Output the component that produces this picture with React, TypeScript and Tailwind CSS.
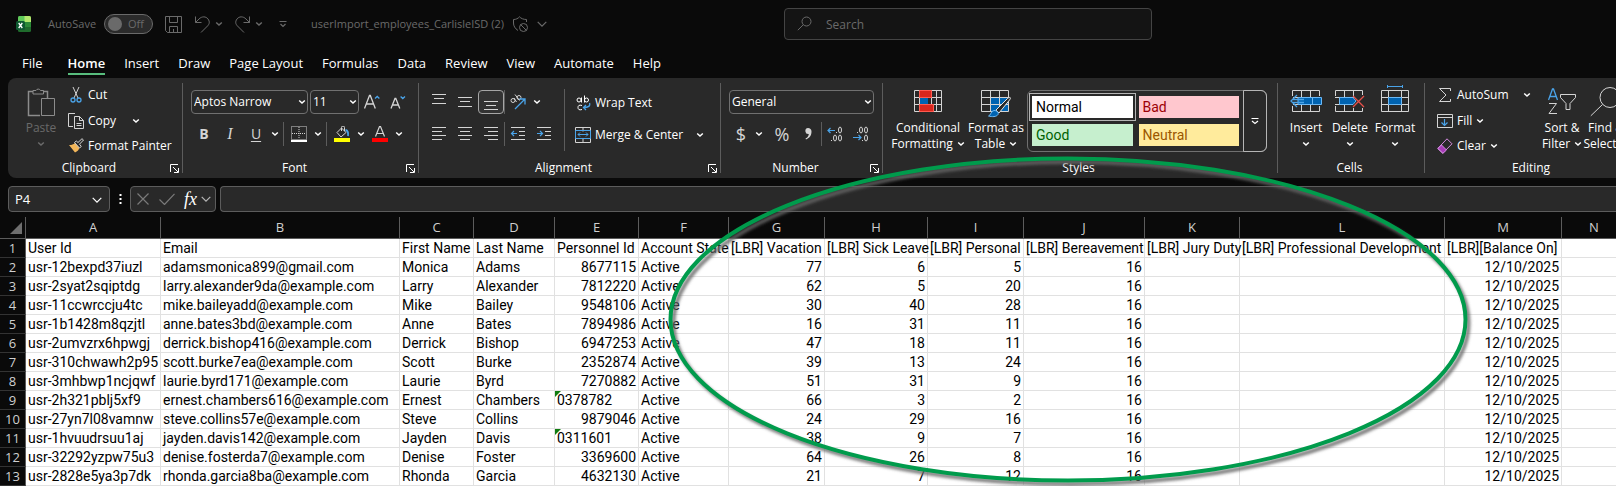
import type { ReactNode } from "react";
import clsx from "clsx";

const TABS = [
  "File",
  "Home",
  "Insert",
  "Draw",
  "Page Layout",
  "Formulas",
  "Data",
  "Review",
  "View",
  "Automate",
  "Help",
];

const COLUMNS = [
  { letter: "A", width: "w-[135px]", title: "User Id" },
  { letter: "B", width: "w-[239px]", title: "Email" },
  { letter: "C", width: "w-[74px]", title: "First Name" },
  { letter: "D", width: "w-[81px]", title: "Last Name" },
  { letter: "E", width: "w-[84px]", title: "Personnel Id" },
  { letter: "F", width: "w-[90px]", title: "Account State" },
  { letter: "G", width: "w-[96px]", title: "[LBR] Vacation" },
  { letter: "H", width: "w-[103px]", title: "[LBR] Sick Leave" },
  { letter: "I", width: "w-[96px]", title: "[LBR] Personal" },
  { letter: "J", width: "w-[121px]", title: "[LBR] Bereavement" },
  { letter: "K", width: "w-[95px]", title: "[LBR] Jury Duty" },
  { letter: "L", width: "w-[205px]", title: "[LBR] Professional Development" },
  { letter: "M", width: "w-[117px]", title: "[LBR][Balance On]" },
  { letter: "N", width: "w-[65px]", title: "" },
];

// id, email, first, last, personnel id, vacation, sick leave, personal
const EMPLOYEES: [string, string, string, string, string, number, number, number][] = [
  ["usr-12bexpd37iuzl", "adamsmonica899@gmail.com", "Monica", "Adams", "8677115", 77, 6, 5],
  ["usr-2syat2sqiptdg", "larry.alexander9da@example.com", "Larry", "Alexander", "7812220", 62, 5, 20],
  ["usr-11ccwrccju4tc", "mike.baileyadd@example.com", "Mike", "Bailey", "9548106", 30, 40, 28],
  ["usr-1b1428m8qzjtl", "anne.bates3bd@example.com", "Anne", "Bates", "7894986", 16, 31, 11],
  ["usr-2umvzrx6hpwgj", "derrick.bishop416@example.com", "Derrick", "Bishop", "6947253", 47, 18, 11],
  ["usr-310chwawh2p95", "scott.burke7ea@example.com", "Scott", "Burke", "2352874", 39, 13, 24],
  ["usr-3mhbwp1ncjqwf", "laurie.byrd171@example.com", "Laurie", "Byrd", "7270882", 51, 31, 9],
  ["usr-2h321pblj5xf9", "ernest.chambers616@example.com", "Ernest", "Chambers", "0378782", 66, 3, 2],
  ["usr-27yn7l08vamnw", "steve.collins57e@example.com", "Steve", "Collins", "9879046", 24, 29, 16],
  ["usr-1hvuudrsuu1aj", "jayden.davis142@example.com", "Jayden", "Davis", "0311601", 38, 9, 7],
  ["usr-32292yzpw75u3", "denise.fosterda7@example.com", "Denise", "Foster", "3369600", 64, 26, 8],
  ["usr-2828e5ya3p7dk", "rhonda.garcia8ba@example.com", "Rhonda", "Garcia", "4632130", 21, 7, 12],
];

function Svg({ w = 16, h = 16, children, className }: { w?: number; h?: number; children: ReactNode; className?: string }) {
  return (
    <svg
      width={w}
      height={h}
      viewBox={`0 0 ${w} ${h}`}
      fill="none"
      stroke="currentColor"
      className={clsx("shrink-0", className)}
      aria-hidden="true"
    >
      {children}
    </svg>
  );
}

function Chevron({ className }: { className?: string }) {
  return (
    <Svg w={8} h={8} className={className}>
      <path d="M1.200 2.500 4 5l2.800-2.500" strokeWidth="1.500" />
    </Svg>
  );
}

function WideChevron({ className }: { className?: string }) {
  return (
    <Svg w={10} h={8} className={className}>
      <path d="M.7 1.800 5 6.200 9.300 1.800" strokeWidth="1.200" />
    </Svg>
  );
}

function MenuArrow({ label }: { label: string }) {
  return (
    <button aria-label={label} className="grid h-6 w-3 shrink-0 place-items-center">
      <Chevron />
    </button>
  );
}

function IconButton({ label, children, active }: { label: string; children: ReactNode; active?: boolean }) {
  return (
    <button
      aria-label={label}
      className={clsx(
        "grid h-6 w-[26px] shrink-0 place-items-center text-[#d4d4d4]",
        active && "rounded border border-[#a6a6a6] bg-[#333]",
      )}
    >
      {children}
    </button>
  );
}

function Rule() {
  return <div className="h-6 w-px shrink-0 bg-[#5c5c5c]" />;
}

function Group({ name, width, launcher, children }: { name: string; width: string; launcher?: boolean; children: ReactNode }) {
  return (
    <section aria-label={name} className={clsx("flex shrink-0 flex-col", width)}>
      <div className="flex h-[81px]">{children}</div>
      <div className="flex h-[18px] items-center pr-[3px]">
        <span className="flex-1 text-center">{name}</span>
        {launcher && (
          <button aria-label={`${name} settings`}>
            <Svg w={9} h={9}>
              <path d="M.5 8V.5H8M3 3l5 5M8.500 4v4.500H4" />
            </Svg>
          </button>
        )}
      </div>
    </section>
  );
}

function Divider() {
  return <div className="my-[5px] w-px shrink-0 bg-[#5c5c5c]" />;
}

function ListButton({ icon, label, children }: { icon: ReactNode; label: string; children?: ReactNode }) {
  return (
    <button className="flex h-[26px] items-center gap-1 whitespace-nowrap">
      {icon}
      <span>{label}</span>
      {children}
    </button>
  );
}

function BigButton({ icon, width, children }: { icon: ReactNode; width: string; children: ReactNode }) {
  return (
    <button className={clsx("flex shrink-0 flex-col items-center whitespace-nowrap pt-2 leading-4", width)}>
      <span className="flex h-[34px] items-start justify-center">{icon}</span>
      {children}
    </button>
  );
}

function PickList({ label, value, width }: { label: string; value: string; width: string }) {
  return (
    <div className={clsx("relative shrink-0", width)}>
      <select
        aria-label={label}
        className="h-6 w-full appearance-none rounded border border-[#707070] bg-[#292929] pl-[2px] leading-[22px] text-white"
      >
        <option>{value}</option>
      </select>
      <Chevron className="pointer-events-none absolute top-2 right-[2px]" />
    </div>
  );
}

function Lines({ rows }: { rows: [number, number, number][] }) {
  return (
    <Svg>
      {rows.map(([x1, x2, y]) => (
        <path key={y} d={`M${x1} ${y}.500H${x2}`} />
      ))}
    </Svg>
  );
}

function TitleBar() {
  return (
    <header className="flex h-12 items-start text-[#6a6a6a]">
      <div className="flex h-12 w-[784px] shrink-0 items-center pl-4 text-[11px]">
        <svg width="16" height="16" viewBox="0 0 16 16" className="shrink-0" aria-label="Excel">
          <rect x="2" width="13" height="16" rx="1.500" fill="#1f6b2c" />
          <path d="M3.500 0H9v6H2V1.500A1.500 1.500 0 0 1 3.500 0z" fill="#5fc95a" />
          <path d="M8.500 0h5A1.500 1.500 0 0 1 15 1.500V6H8.500z" fill="#b4e86e" />
          <path d="M8.500 6H15v5H8.500z" fill="#2b8a38" />
          <rect y="5" width="9" height="9" rx="1.500" fill="#0e5a31" />
          <path d="M2.700 7l3.600 5M6.300 7l-3.600 5" stroke="#fff" strokeWidth="1.300" />
        </svg>
        <label htmlFor="autosave" className="pl-4">AutoSave</label>
        <div className="relative ml-2 h-5 w-[49px] shrink-0">
          <input
            id="autosave"
            type="checkbox"
            role="switch"
            className="block h-5 w-[49px] appearance-none rounded-full border border-[#6a6a6a] bg-[#2b2b2b]"
          />
          <div className="pointer-events-none absolute inset-0 flex items-center gap-[6px] pl-1">
            <span className="size-[14px] rounded-full bg-[#6a6a6a]" />
            <span>Off</span>
          </div>
        </div>
        <button aria-label="Save" className="ml-3">
          <Svg w={17} h={17}>
            <path d="M.5.5h16v16H2.500l-2-2zM4.500.5v6h8v-6M4.500 16.500v-6h8v6M8.500 13v3" />
          </Svg>
        </button>
        <button aria-label="Undo" className="ml-[13px]">
          <Svg w={16} h={17}>
            <path d="M.5.5v6h6M.5 6.500 4 3C7 0 11 .3 13 3s1.500 5-.5 7L6 16.500" />
          </Svg>
        </button>
        <button aria-label="Undo list" className="ml-1"><Chevron /></button>
        <button aria-label="Redo" className="ml-3">
          <Svg w={16} h={17}>
            <path d="M14.500.5v6h-6M14.500 6.500 11 3C8 0 4 .3 2 3s-1.500 5 .5 7L9 16.500" />
          </Svg>
        </button>
        <button aria-label="Redo list" className="ml-1"><Chevron /></button>
        <button aria-label="Customize toolbar" className="ml-4">
          <Svg w={8} h={8}>
            <path d="M.5 1.500h7M1.500 4 4 6.500 6.500 4" strokeWidth="1.200" />
          </Svg>
        </button>
        <span className="ml-6 whitespace-nowrap">userImport_employees_CarlisleISD (2)</span>
        <Svg w={17} h={17} className="ml-2">
          <path d="M6 14.500C3 12.500 1.500 10 1.500 7V3.500C4 3.500 6 2.500 7.500.8 9 2.500 11.500 3.500 14.500 3.500V6" />
          <circle cx="11.500" cy="11.500" r="4" />
          <path d="m8.700 8.700 5.600 5.600" />
        </Svg>
        <button aria-label="File options" className="ml-2"><WideChevron /></button>
      </div>
      <div className="relative mt-2 w-[368px] shrink-0">
        <input
          type="search"
          aria-label="Search"
          placeholder="Search"
          className="block h-8 w-full rounded border border-[#444] bg-[#141414] pl-[41px] placeholder:text-[#6a6a6a]"
        />
        <Svg className="pointer-events-none absolute top-2 left-[13px]">
          <circle cx="9.500" cy="5.500" r="4.500" />
          <path d="M6.300 8.700.8 14.200" />
        </Svg>
      </div>
    </header>
  );
}

function TabBar() {
  return (
    <nav className="flex h-[30px] items-start gap-[19px] pl-[22px] text-[13px] leading-[26px]">
      {TABS.map((tab) => (
        <a
          key={tab}
          href={`#${tab}`}
          className={clsx(
            "whitespace-nowrap pt-[2px]",
            tab === "File" && "pr-[6px]",
            tab === "Home" && "h-[27px] border-b-2 border-[#58bd7d] font-semibold",
          )}
        >
          {tab}
        </a>
      ))}
    </nav>
  );
}

function ClipboardGroup() {
  return (
    <Group name="Clipboard" width="w-[174px]" launcher>
      <button disabled className="flex w-[60px] flex-col items-center pt-2 pl-[6px] leading-4 text-[#6a6a6a]">
        <Svg w={28} h={34} className="text-[#8c8c8c]">
          <path d="M13 29.500H1.500V5.500H6M16 5.500h4.500V12" strokeWidth="1.500" />
          <path d="M6 8V4.500h3a2.500 2.500 0 0 1 4.500 0h3V8z" />
          <path d="M14.500 12.500h13v17h-13z" />
        </Svg>
        Paste
        <Chevron className="mt-1" />
      </button>
      <div className="flex flex-col items-start pt-1">
        <ListButton
          label="Cut"
          icon={
            <Svg>
              <path d="M5 0l5 11M11 0 6 11" stroke="#d4d4d4" />
              <circle cx="5" cy="13" r="2" stroke="#4aa3e8" strokeWidth="1.300" />
              <circle cx="11" cy="13" r="2" stroke="#4aa3e8" strokeWidth="1.300" />
            </Svg>
          }
        />
        <ListButton
          label="Copy"
          icon={
            <Svg>
              <path d="M5 13.500H.5V.5H7M6.500 3.500h5l4 4v8h-9zM11.500 3.500v4h4M8.500 10.500h5M8.500 12.500h5" stroke="#d4d4d4" />
            </Svg>
          }
        >
          <Chevron className="ml-3" />
        </ListButton>
        <ListButton
          label="Format Painter"
          icon={
            <Svg>
              <path d="M1 7l6 7.500c2.500-1 4-3 4.500-5L7 5C5 6.800 3 7.200 1 7z" fill="#f2b65a" stroke="none" />
              <path d="M6.500 4.500 11.500 10l1.800-1.500-1.800-2.300L15.500 2 14 .7 10 4.500 8.300 3z" fill="#292929" stroke="#d4d4d4" />
            </Svg>
          }
        />
      </div>
    </Group>
  );
}

function FontGroup() {
  return (
    <Group name="Font" width="w-[235px]" launcher>
      <div className="flex flex-col gap-2 pt-3 pl-2">
        <div className="flex">
          <PickList label="Font" value="Aptos Narrow" width="w-[117px]" />
          <div className="w-[2px]" />
          <PickList label="Font size" value="11" width="w-[49px]" />
          <IconButton label="Increase font size">
            <Svg>
              <path d="M.5 14.500 5.500 1.500h.8l5 13M2.500 10h7" strokeWidth="1.300" />
              <path d="M11 4.500 13.200 2.500 15.400 4.500" stroke="#4aa3e8" strokeWidth="1.300" />
            </Svg>
          </IconButton>
          <IconButton label="Decrease font size">
            <Svg>
              <path d="M1 14.500 5 4.500h.8l4 10M2.500 11h6" strokeWidth="1.300" />
              <path d="M10.600 2.500 12.800 4.500 15 2.500" stroke="#4aa3e8" strokeWidth="1.300" />
            </Svg>
          </IconButton>
        </div>
        <div className="flex">
          <IconButton label="Bold"><span className="text-sm font-bold">B</span></IconButton>
          <IconButton label="Italic"><span className="font-['Liberation_Serif',serif] text-base italic">I</span></IconButton>
          <IconButton label="Underline"><span className="text-sm leading-4 underline underline-offset-2">U</span></IconButton>
          <MenuArrow label="Underline styles" />
          <div className="px-[2px]"><Rule /></div>
          <IconButton label="Borders">
            <Svg>
              <path d="M.5.5h15v13H.5zM8 1v12M1 7.500h14" strokeDasharray="1 1" />
              <path d="M0 15h16" strokeWidth="2" stroke="#fff" />
            </Svg>
          </IconButton>
          <MenuArrow label="Border styles" />
          <div className="px-[2px]"><Rule /></div>
          <IconButton label="Fill color">
            <Svg>
              <path d="M3 6.500 7.500 2 12 6.500 7 11zM7.500 5V1.500a1.500 1.500 0 0 1 3 0V5" />
              <path d="M11.500 4c2.500.5 3 2.500 2.500 6" stroke="#4aa3e8" strokeWidth="1.800" />
              <path d="M0 14h16" strokeWidth="4" stroke="#ffff00" />
            </Svg>
          </IconButton>
          <MenuArrow label="Fill colors" />
          <IconButton label="Font color">
            <Svg>
              <path d="M3.500 10.500 7.500.5h1l4 10M5 7.500h6" strokeWidth="1.200" />
              <path d="M0 14h16" strokeWidth="4" stroke="#ff0000" />
            </Svg>
          </IconButton>
          <MenuArrow label="Font colors" />
        </div>
      </div>
    </Group>
  );
}

function AlignmentGroup() {
  return (
    <Group name="Alignment" width="w-[301px]" launcher>
      <div className="flex w-[138px] flex-col gap-2 pt-3 pl-[7px]">
        <div className="flex">
          <IconButton label="Top align"><Lines rows={[[1, 15, 0], [3, 13, 4], [1, 15, 9]]} /></IconButton>
          <IconButton label="Middle align"><Lines rows={[[1, 15, 3], [3, 13, 7], [1, 15, 12]]} /></IconButton>
          <IconButton label="Bottom align" active><Lines rows={[[1, 15, 7], [3, 13, 11], [1, 15, 15]]} /></IconButton>
          <Rule />
          <IconButton label="Orientation">
            <Svg>
              <circle cx="3" cy="6.500" r="2" />
              <path d="M4 4 6.500 8M5 .5l4.500 6" />
              <circle cx="9" cy="3.500" r="2" />
              <path d="M5 15 14.500 5.500M9.500 5h5.500v5.500" stroke="#4aa3e8" strokeWidth="1.300" />
            </Svg>
          </IconButton>
          <MenuArrow label="Orientation list" />
        </div>
        <div className="flex">
          <IconButton label="Align left"><Lines rows={[[1, 15, 1], [1, 11, 5], [1, 15, 9], [1, 11, 13]]} /></IconButton>
          <IconButton label="Center"><Lines rows={[[1, 15, 1], [3, 13, 5], [1, 15, 9], [3, 13, 13]]} /></IconButton>
          <IconButton label="Align right"><Lines rows={[[1, 15, 1], [5, 15, 5], [1, 15, 9], [5, 15, 13]]} /></IconButton>
          <Rule />
          <IconButton label="Decrease indent">
            <Svg>
              <path d="M1 1.500h14M9 5.500h6M9 9.500h6M1 13.500h14" />
              <path d="M1.500 7.500H7M4 5 1.500 7.500 4 10" stroke="#4aa3e8" strokeWidth="1.200" />
            </Svg>
          </IconButton>
          <IconButton label="Increase indent">
            <Svg>
              <path d="M1 1.500h14M9 5.500h6M9 9.500h6M1 13.500h14" />
              <path d="M1 7.500h5.500M4 5l2.500 2.500L4 10" stroke="#4aa3e8" strokeWidth="1.200" />
            </Svg>
          </IconButton>
        </div>
      </div>
      <div className="mt-[11px] ml-[7px] h-[62px] w-px bg-[#5c5c5c]" />
      <div className="flex flex-1 flex-col gap-[6px] pt-3 pl-[10px]">
        <ListButton
          label="Wrap Text"
          icon={
            <Svg>
              <circle cx="4" cy="5" r="2" />
              <path d="M6.500 2.500v5M9.500.5v7M7 10.500c-3-1-4 .3-4 2s1 3 4 2" />
              <circle cx="11.500" cy="5" r="2" />
              <path d="M14.500 8c1 3-1 4.500-6 4.500M11 10 8.500 12.500 11 15" stroke="#4aa3e8" strokeWidth="1.300" />
            </Svg>
          }
        />
        <div className="flex items-center justify-between pr-[14px]">
          <ListButton
            label="Merge & Center"
            icon={
              <Svg>
                <path d="M.5.5h15v15H.5zM8 .5v4M8 11.500v4" stroke="#d4d4d4" />
                <path d="M.5 3.500h15v8H.5zM3 7.500h10M5 5.500l-2 2 2 2M11 5.500l2 2-2 2" stroke="#4aa3e8" />
              </Svg>
            }
          />
          <MenuArrow label="Merge options" />
        </div>
      </div>
    </Group>
  );
}

function NumberGroup() {
  return (
    <Group name="Number" width="w-[161px]" launcher>
      <div className="flex flex-1 flex-col gap-2 px-2 pt-3">
        <PickList label="Number format" value="General" width="w-full" />
        <div className="flex">
          <button aria-label="Accounting format" className="h-6 w-6 text-lg leading-6 text-[#d4d4d4]">$</button>
          <MenuArrow label="Accounting formats" />
          <div className="w-1" />
          <IconButton label="Percent style"><span className="text-lg leading-6">%</span></IconButton>
          <IconButton label="Comma style">
            <Svg w={8} h={14}>
              <path d="M4 1a3 3 0 1 0 .8 6C4.500 9 3.500 10.500 1.500 11.500l.5 1C6 11 7.500 8 7.500 4.500 7.500 2.300 6 1 4 1z" fill="currentColor" stroke="none" />
            </Svg>
          </IconButton>
          <Rule />
          <IconButton label="Increase decimal">
            <Svg>
              <path d="M.8 4.500H8M3.500 2 1 4.500 3.500 7" stroke="#4aa3e8" strokeWidth="1.200" />
              <ellipse cx="13" cy="4" rx="1.500" ry="3" />
              <ellipse cx="8" cy="12" rx="1.500" ry="3" />
              <ellipse cx="13" cy="12" rx="1.500" ry="3" />
              <path d="M9 6.500h1M4 14.500h1" />
            </Svg>
          </IconButton>
          <IconButton label="Decrease decimal">
            <Svg>
              <path d="M0 11.500h8M5.500 9 8 11.500 5.500 14" stroke="#4aa3e8" strokeWidth="1.200" />
              <ellipse cx="13" cy="4" rx="1.500" ry="3" />
              <ellipse cx="8" cy="4" rx="1.500" ry="3" />
              <ellipse cx="13" cy="12" rx="1.500" ry="3" />
              <path d="M4 6.500h1M9 14.500h1" />
            </Svg>
          </IconButton>
        </div>
      </div>
    </Group>
  );
}

function StylesGroup() {
  return (
    <Group name="Styles" width="w-[394px]">
      <BigButton
        width="w-[82px] pl-2"
        icon={
          <Svg w={28} h={28} className="text-[#d4d4d4]">
            <path d="M.5 4.500h27v21H.5zM5.500 4.500v21M17.500 4.500v21M22.500 4.500v21M.5 11.500h27M.5 18.500h27" />
            <path d="M5.500 4.500h12v7h-12zM5.500 18.500h14v7h-14z" fill="#d9261c" stroke="#ff5a4f" />
            <path d="M6 12h8v6H6z" fill="#0063b1" stroke="none" />
            <path d="M14 12h3v6h-3z" fill="#292929" stroke="none" />
          </Svg>
        }
      >
        <span>Conditional</span>
        <span className="flex items-center gap-1">Formatting <Chevron /></span>
      </BigButton>
      <BigButton
        width="w-[62px]"
        icon={
          <Svg w={30} h={32} className="text-[#d4d4d4]">
            <path d="M9.500 11.500h18v14h-18z" fill="#0063b1" stroke="none" />
            <path d="M.5 4.500h27v21H.5zM9.500 4.500v21M18.500 4.500v21M.5 11.500h27M.5 18.500h27" />
            <path d="M15 24 26.500 12.500c2.500-2 4-1 2 1.500L18 27z" fill="#292929" stroke="#e6e6e6" />
            <path d="M7.500 30c2.500-.5 2-5 5.500-5.500 3 0 5 2 4 4-1.500 2.500-6 2.500-9.500 1.500z" fill="#0063b1" stroke="#6bb8f5" />
          </Svg>
        }
      >
        <span>Format as</span>
        <span className="flex items-center gap-1">Table <Chevron /></span>
      </BigButton>
      <div className="mt-3 flex h-[62px] w-[240px] rounded-md border border-[#707070] text-sm">
        <div className="grid flex-1 grid-cols-2 gap-[6px] px-1 py-[5px] font-[Roboto,sans-serif] *:pl-1 *:text-left">
          <button className="bg-white text-black outline-1 outline-offset-2 outline-[#b5b5b5]">Normal</button>
          <button className="bg-[#ffc7ce] text-[#9c0006]">Bad</button>
          <button className="bg-[#c6efce] text-[#006100]">Good</button>
          <button className="bg-[#ffeb9c] text-[#9c5700]">Neutral</button>
        </div>
        <button aria-label="More styles" className="-my-px -mr-px grid w-6 place-items-center rounded-r-md border border-[#b5b5b5]">
          <Svg w={8} h={8}>
            <path d="M.5 1.500h7M1 4l3 2.500L7 4" strokeWidth="1.200" />
          </Svg>
        </button>
      </div>
    </Group>
  );
}

function CellsGroup() {
  return (
    <Group name="Cells" width="w-[146px]">
      <div className="flex pl-[6px]">
        <BigButton
          width="w-11"
          icon={
            <Svg w={32} h={28} className="text-[#d4d4d4]">
              <path d="M2.500 10V4.500h27V10M2.500 20v5.500h27V20M11.500 4.500v7M20.500 4.500v7M11.500 18.500v7M20.500 18.500v7M3 11.500h26M3 18.500h26" />
              <path d="M8 11.500h23.500v7H8z" fill="#0063b1" stroke="#6bb8f5" />
              <path d="M22.500 12v6" stroke="#6bb8f5" />
              <path d="M14 13.500H3M14 16.500H3M7 9 1 15l6 6" stroke="#4aa3e8" strokeWidth="1.300" />
            </Svg>
          }
        >
          Insert
          <Chevron className="mt-1" />
        </BigButton>
        <BigButton
          width="w-11"
          icon={
            <Svg w={30} h={28} className="text-[#d4d4d4]">
              <path d="M.5 10V4.500h27V9M.5 20v5.500h27V22M9.500 4.500v7M18.500 4.500v7M9.500 18.500v7M18.500 22v3M0 11.500h19M0 18.500h17" />
              <path d="M4.500 11.500H18l3 3.500-3 3.500H4.500z" fill="#0063b1" stroke="#6bb8f5" />
              <path d="m18 10 11 11M29 10 18 21" stroke="#e8504a" strokeWidth="1.300" />
            </Svg>
          }
        >
          Delete
          <Chevron className="mt-1" />
        </BigButton>
        <BigButton
          width="w-[46px]"
          icon={
            <Svg w={28} h={28} className="overflow-visible text-[#d4d4d4]">
              <path d="M.5 4.500h27v21H.5zM7.500 4.500v21M20.500 4.500v21M.5 11.500h27M.5 18.500h27" />
              <path d="M7.500 11.500h13v7h-13z" fill="#0063b1" stroke="#6bb8f5" />
              <path d="M6.500.5h15M6.500-1v3M21.500-1v3" stroke="#4aa3e8" />
            </Svg>
          }
        >
          Format
          <Chevron className="mt-1" />
        </BigButton>
      </div>
    </Group>
  );
}

function EditingGroup() {
  return (
    <Group name="Editing" width="w-[215px]">
      <div className="flex w-[115px] shrink-0 flex-col pt-1 pl-3">
        <div className="flex items-center justify-between pr-[7px]">
          <ListButton
            label="AutoSum"
            icon={
              <Svg className="text-[#d4d4d4]">
                <path d="M13.500 4V1.500H2.500L9 8l-6.500 6.500h11V12" />
              </Svg>
            }
          />
          <MenuArrow label="Sum functions" />
        </div>
        <ListButton
          label="Fill"
          icon={
            <Svg>
              <path d="M.5 1.500h15v13H.5zM.5 4.500h15" stroke="#d4d4d4" />
              <path d="M7.500 6v6.500M4.500 9.500l3 3 3-3" stroke="#4aa3e8" strokeWidth="1.200" />
            </Svg>
          }
        >
          <Chevron />
        </ListButton>
        <ListButton
          label="Clear"
          icon={
            <Svg>
              <path d="M.7 10.500 10 .8l5 5-9.300 9.500z" stroke="#d48be0" />
              <path d="M1 10.500 4.500 7l5 5L6 15.300z" fill="#a83bb8" stroke="#d48be0" />
            </Svg>
          }
        >
          <Chevron />
        </ListButton>
      </div>
      <BigButton
        width="w-11"
        icon={
          <Svg w={28} h={32} className="text-[#d4d4d4]">
            <path d="M.5 14 4.500 3h1l4 11M2 10.500h6" stroke="#4aa3e8" strokeWidth="1.300" />
            <path d="M1 17.500h7.500L1 27.500h8M12.500 8.500h15v3L22 17.500v6h-4v-6l-5.500-6z" />
          </Svg>
        }
      >
        <span>Sort &amp;</span>
        <span className="flex items-center gap-1">Filter <Chevron /></span>
      </BigButton>
      <BigButton
        width="w-11"
        icon={
          <Svg w={32} h={32} className="text-[#d4d4d4]">
            <circle cx="20" cy="11.500" r="10" />
            <path d="M12.500 18.500.8 29.800" />
          </Svg>
        }
      >
        <span>Find &amp;</span>
        <span className="flex items-center gap-1">Select <Chevron /></span>
      </BigButton>
    </Group>
  );
}

function FormulaBar() {
  return (
    <div className="mt-2 mb-[5px] flex h-[26px] pl-2">
      <div className="relative w-[102px] shrink-0">
        <input
          aria-label="Name box"
          defaultValue="P4"
          className="block h-[26px] w-full rounded border border-[#5c5c5c] bg-[#292929] pl-[6px] text-[13px]"
        />
        <button aria-label="Named ranges" className="absolute top-[10px] right-2"><WideChevron /></button>
      </div>
      <div className="grid w-5 place-items-center">
        <Svg w={3} h={12}>
          <path d="M1.500 1v2M1.500 5v2M1.500 9v2" strokeWidth="2" />
        </Svg>
      </div>
      <div className="flex w-[86px] shrink-0 items-center rounded border border-[#5c5c5c] bg-[#292929] pl-[6px]">
        <button aria-label="Cancel" className="text-[#7a7a7a]">
          <Svg w={12} h={12}><path d="m.5.5 11 11M11.500.5l-11 11" strokeWidth="1.200" /></Svg>
        </button>
        <button aria-label="Enter" className="ml-[10px] text-[#7a7a7a]">
          <Svg w={16} h={12}><path d="m.5 6.500 5 5L15.500.8" strokeWidth="1.200" /></Svg>
        </button>
        <button aria-label="Insert function" className="ml-[9px] font-['Liberation_Serif',serif] text-lg leading-6 italic">
          fx
        </button>
        <button aria-label="Functions" className="ml-1 text-[#b5b5b5]"><WideChevron /></button>
      </div>
      <input
        aria-label="Formula"
        className="ml-1 block h-[26px] flex-1 rounded-l border border-r-0 border-[#5c5c5c] bg-[#292929] px-2"
      />
    </div>
  );
}

const cell = "h-[19px] overflow-visible border-r border-b border-[#e1e1e1] px-[2px] pt-px whitespace-nowrap";

function RowNumber({ n }: { n: number }) {
  return (
    <th
      scope="row"
      className="h-[19px] border-r border-b border-r-[#5c5c5c] border-b-[#333] bg-[#0a0a0a] p-0 font-['Open_Sans',sans-serif] text-[13px] font-normal text-[#d0d0d0]"
    >
      {n}
    </th>
  );
}

function Sheet() {
  return (
    <table className="w-[1627px] table-fixed border-separate border-spacing-0 bg-white font-[Roboto,sans-serif] text-sm leading-[17px] text-black">
      <colgroup>
        <col className="w-[26px]" />
        {COLUMNS.map((c) => (
          <col key={c.letter} className={c.width} />
        ))}
      </colgroup>
      <thead>
        <tr className="bg-[#0a0a0a] font-['Open_Sans',sans-serif] text-[13px] text-[#d0d0d0]">
          <th className="h-[22px] border-r border-b border-[#5c5c5c] p-0">
            <Svg w={12} h={12} className="mr-[3px] ml-auto">
              <path d="M12 0v12H0z" fill="#6f6f6f" stroke="none" />
            </Svg>
          </th>
          {COLUMNS.map((c) => (
            <th key={c.letter} className="border-r border-b border-[#5c5c5c] p-0 font-normal">{c.letter}</th>
          ))}
        </tr>
      </thead>
      <tbody>
        <tr>
          <RowNumber n={1} />
          {COLUMNS.map((c) => (
            <td key={c.letter} className={cell}>{c.title}</td>
          ))}
        </tr>
        {EMPLOYEES.map(([id, email, first, last, personnel, vacation, sick, personal], i) => {
          // a leading zero means the number was stored as text
          const asText = personnel.startsWith("0");
          return (
            <tr key={id}>
              <RowNumber n={i + 2} />
              <td className={cell}>{id}</td>
              <td className={cell}>{email}</td>
              <td className={cell}>{first}</td>
              <td className={cell}>{last}</td>
              <td className={clsx(cell, "relative", !asText && "text-right")}>
                {asText && (
                  <Svg w={6} h={6} className="absolute top-0 left-0">
                    <path d="M0 0h6L0 6z" fill="#107c10" stroke="none" />
                  </Svg>
                )}
                {personnel}
              </td>
              <td className={cell}>Active</td>
              {[vacation, sick, personal, 16].map((n, j) => (
                <td key={j} className={clsx(cell, "text-right")}>{n}</td>
              ))}
              <td className={cell} />
              <td className={cell} />
              <td className={clsx(cell, "text-right")}>12/10/2025</td>
              <td className={cell} />
            </tr>
          );
        })}
      </tbody>
    </table>
  );
}

// Hand-placed callout ring around the leave balance columns
function Callout() {
  return (
    <svg
      width="816"
      height="344"
      viewBox="0 0 816 344"
      fill="none"
      className="pointer-events-none absolute top-[148px] left-[660px]"
      aria-hidden="true"
    >
      <defs>
        <filter id="soft" x="-5%" y="-5%" width="110%" height="110%">
          <feGaussianBlur stdDeviation="1.800" />
        </filter>
      </defs>
      <ellipse cx="411" cy="175" rx="397.500" ry="161" stroke="#666" strokeOpacity="0.85" strokeWidth="4" filter="url(#soft)" />
      <ellipse cx="408" cy="171.500" rx="397.500" ry="161" stroke="#009b4c" strokeWidth="4" />
    </svg>
  );
}

export default function App() {
  return (
    <div className="relative min-h-screen overflow-hidden bg-[#0a0a0a] font-['Open_Sans','Noto_Sans',sans-serif] text-xs text-white">
      <TitleBar />
      <TabBar />
      <div className="ml-2 flex h-[100px] overflow-hidden rounded-l-lg bg-[#292929]">
        <ClipboardGroup />
        <Divider />
        <FontGroup />
        <Divider />
        <AlignmentGroup />
        <Divider />
        <NumberGroup />
        <Divider />
        <StylesGroup />
        <Divider />
        <CellsGroup />
        <Divider />
        <EditingGroup />
      </div>
      <FormulaBar />
      <Sheet />
      <Callout />
    </div>
  );
}
